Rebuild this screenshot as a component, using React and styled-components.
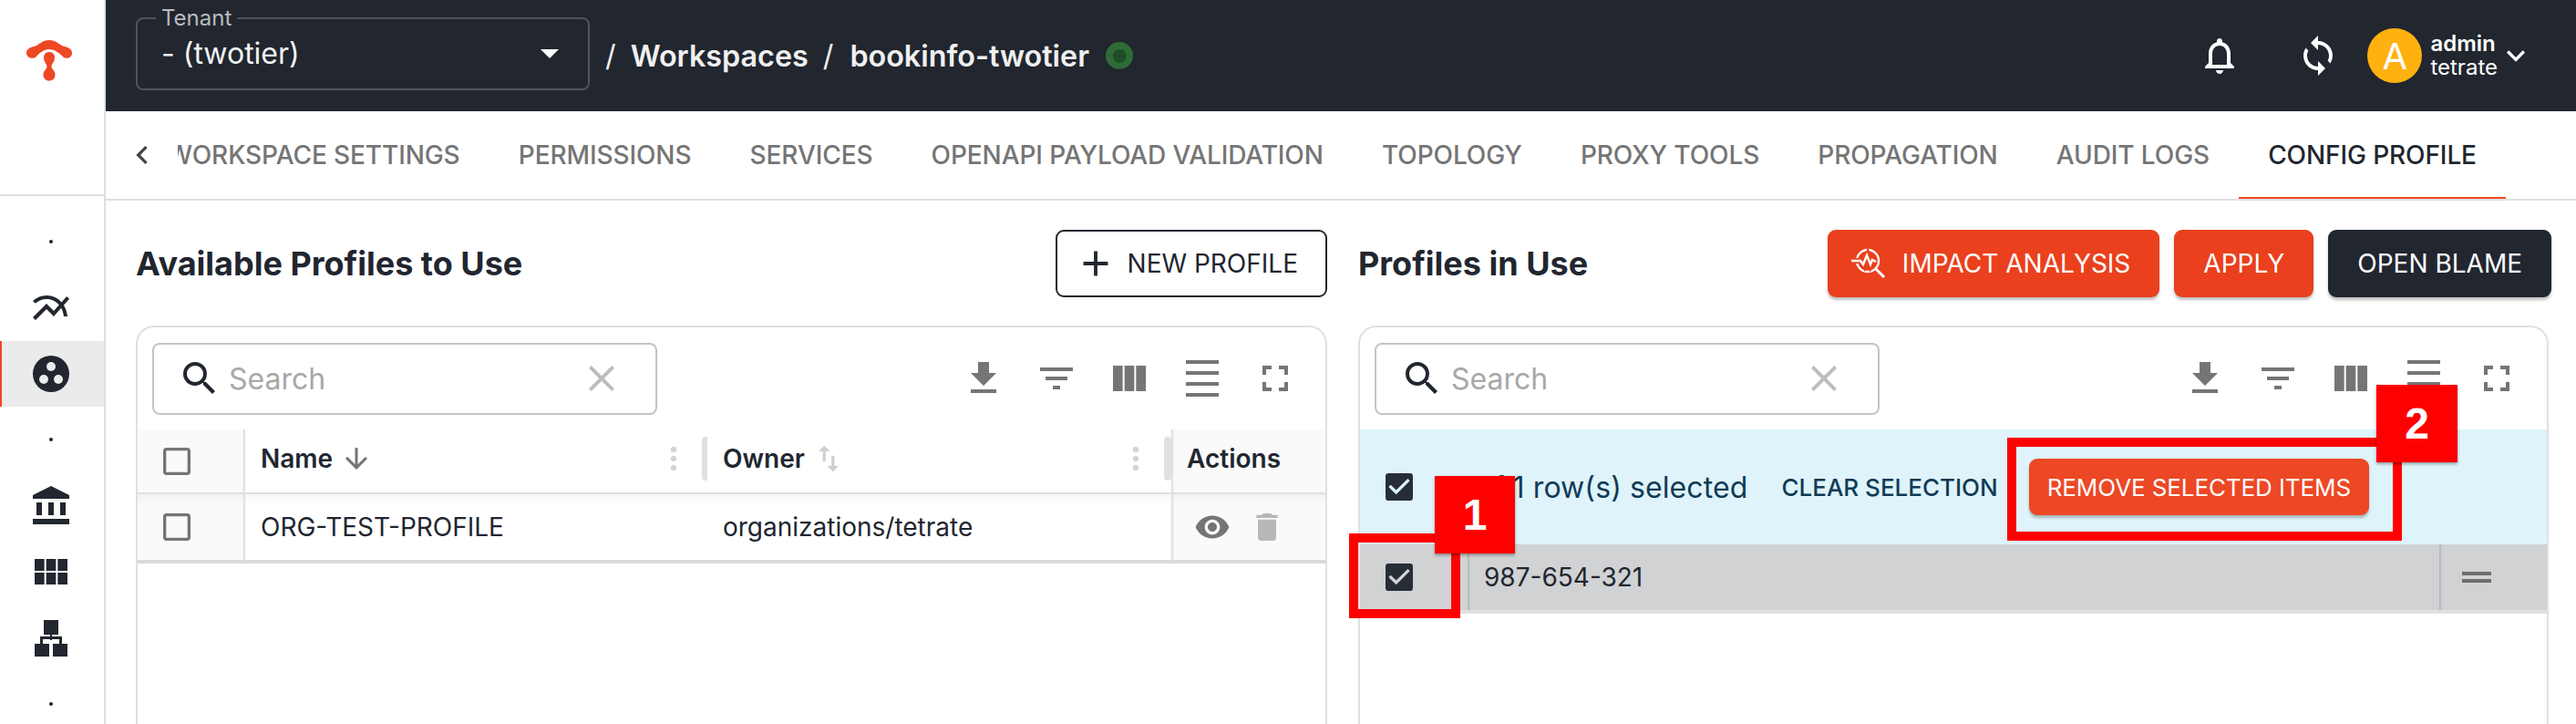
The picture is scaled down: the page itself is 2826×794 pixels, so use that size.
import React from 'react';
import styled, { createGlobalStyle } from 'styled-components';
import {
  MdAccountBalance,
  MdAdd,
  MdArrowDownward,
  MdArrowDropDown,
  MdCheckBox,
  MdCheckBoxOutlineBlank,
  MdChevronLeft,
  MdClose,
  MdDelete,
  MdDensitySmall,
  MdDragHandle,
  MdFileDownload,
  MdFilterList,
  MdFullscreen,
  MdKeyboardArrowDown,
  MdMoreVert,
  MdMultilineChart,
  MdNotificationsNone,
  MdSearch,
  MdSwapVert,
  MdSync,
  MdViewColumn,
  MdViewModule,
  MdVisibility,
} from 'react-icons/md';

const GlobalStyle = createGlobalStyle`
  html, body {
    margin: 0;
    padding: 0;
    background: #fff;
  }
  body {
    font-family: Inter, 'Liberation Sans', sans-serif;
    color: #21262f;
  }
  * { box-sizing: border-box; }
`;

const Page = styled.div`
  position: relative;
  display: grid;
  grid-template-columns: 116px 1fr;
  width: 2826px;
  height: 794px;
  overflow: hidden;
`;

/* sidebar */
const Sidebar = styled.aside`
  border-right: 2px solid #e0e0e0;
  display: flex;
  flex-direction: column;
`;

const LogoBlock = styled.div`
  height: 215px;
  flex-shrink: 0;
  border-bottom: 2px solid #e0e0e0;
  padding: 30px 0 0 20px;
  margin-bottom: 14px;
`;

const NavItem = styled.div`
  height: 72.4px;
  flex-shrink: 0;
  display: flex;
  align-items: center;
  justify-content: center;
  color: #21262f;
  font-size: 48px;
  background: ${(p) => (p.$active ? '#ebebeb' : 'transparent')};
  border-left: 2px solid ${(p) => (p.$active ? '#ee4723' : 'transparent')};
  padding-right: 4px;
`;

const NavDot = styled.span`
  width: 4px;
  height: 4px;
  border-radius: 50%;
  background: #21262f;
`;

/* top bar */
const Main = styled.main`
  display: flex;
  flex-direction: column;
  min-width: 0;
`;

const TopBar = styled.header`
  height: 122px;
  flex-shrink: 0;
  background: #21262f;
  color: #fff;
  display: flex;
  align-items: center;
  padding: 0 33px;
`;

const TenantSelect = styled.fieldset`
  width: 498px;
  height: 89px;
  margin: -14px 0 0;
  padding: 0 26px 10px 26px;
  border: 2px solid #50545b;
  border-radius: 8px;
  display: flex;
  align-items: center;
  justify-content: space-between;
  font-size: 32px;
  color: #f2f2f2;

  legend {
    padding: 0 6px;
    margin-left: -6px;
    font-size: 24px;
    line-height: 20px;
    color: #b9bbbe;
  }
`;

const Caret = styled.span`
  display: flex;
  font-size: 48px;
  color: #fff;
  margin-right: -8px;
`;

const Crumb = styled.span`
  font-size: 32.3px;
  font-weight: ${(p) => (p.$slash ? 400 : 600)};
  color: #f0f0f0;
  margin-left: ${(p) => p.$left}px;
`;

const StatusDot = styled.span`
  width: 30px;
  height: 30px;
  margin-left: 18px;
  border-radius: 50%;
  background: #2f6b36;
  display: flex;
  align-items: center;
  justify-content: center;

  &::after {
    content: '';
    width: 15px;
    height: 15px;
    border-radius: 50%;
    background: #1d4f25;
  }
`;

const TopActions = styled.div`
  margin-left: auto;
  display: flex;
  align-items: center;
  margin-right: 13px;
`;

const TopIcon = styled.span`
  display: flex;
  font-size: 48px;
  color: #fff;
  margin-right: ${(p) => p.$right}px;
`;

const Avatar = styled.span`
  width: 60px;
  height: 60px;
  border-radius: 50%;
  background: #ffb10f;
  color: #fff;
  font-size: 40px;
  display: flex;
  align-items: center;
  justify-content: center;
`;

const UserBlock = styled.div`
  margin-left: 9px;
  display: flex;
  flex-direction: column;
  font-size: 24px;
  line-height: 26px;
  color: #fff;

  b {
    font-weight: 600;
  }
`;

const UserChevron = styled.span`
  display: flex;
  font-size: 40px;
  color: #fff;
`;

/* tabs */
const TabBar = styled.nav`
  height: 98px;
  flex-shrink: 0;
  border-bottom: 2px solid #e0e0e0;
  display: flex;
  align-items: stretch;
`;

const TabBack = styled.span`
  width: 79px;
  flex-shrink: 0;
  display: flex;
  align-items: center;
  justify-content: center;
  font-size: 40px;
  color: #444;
`;

const TabScroller = styled.div`
  flex: 1;
  min-width: 0;
  overflow: hidden;
  display: flex;
  justify-content: flex-end;
  padding-right: 77px;
`;

const Tab = styled.span`
  flex-shrink: 0;
  display: flex;
  align-items: center;
  padding: 2px 32.1px 0;
  font-size: 28px;
  font-weight: 500;
  letter-spacing: -0.1px;
  white-space: nowrap;
  color: ${(p) => (p.$active ? '#21262f' : '#757575')};
  border-bottom: 4px solid ${(p) => (p.$active ? '#ee4723' : 'transparent')};
  margin-bottom: -2px;
`;

/* content */
const Content = styled.div`
  flex: 1;
  min-height: 0;
  display: grid;
  grid-template-columns: 1307px 1306px;
  column-gap: 34px;
  padding: 32px 0 0 33px;
`;

const Column = styled.section`
  display: flex;
  flex-direction: column;
  min-width: 0;
`;

const ColumnHead = styled.div`
  height: 74px;
  flex-shrink: 0;
  display: flex;
  align-items: center;
  justify-content: space-between;
  margin-bottom: 31px;
`;

const Title = styled.h2`
  margin: 0;
  font-size: 36px;
  font-weight: 700;
  color: #21262f;
`;

const ButtonRow = styled.div`
  display: flex;
  gap: 16px;
  margin-right: -3px;
`;

const Button = styled.button`
  height: 74px;
  display: flex;
  align-items: center;
  padding: 0 ${(p) => (p.$variant === 'outline' ? 30 : 32)}px 0 ${(p) => p.$pad || 32}px;
  border-radius: 9px;
  font-family: inherit;
  font-size: 28px;
  font-weight: 400;
  white-space: nowrap;
  color: ${(p) => (p.$variant === 'outline' ? '#21262f' : '#fff')};
  background: ${(p) =>
    p.$variant === 'outline' ? '#fff' : p.$variant === 'dark' ? '#21262f' : '#ea401d'};
  border: ${(p) => (p.$variant === 'outline' ? '2px solid #21262f' : 'none')};
  box-shadow: ${(p) => (p.$variant === 'outline' ? 'none' : '0 3px 3px rgba(0,0,0,0.25)')};

  svg {
    margin-right: ${(p) => p.$iconGap || 18}px;
  }
`;

const Panel = styled.div`
  flex: 1;
  border: 2px solid #e0e0e0;
  border-bottom: none;
  border-radius: 20px 20px 0 0;
  min-height: 0;
`;

const PanelTools = styled.div`
  height: 112px;
  display: flex;
  align-items: center;
  justify-content: space-between;
  padding: 0 15px 0 16px;
`;

const SearchBox = styled.div`
  width: 554px;
  height: 79px;
  border: 2px solid #c4c4c4;
  border-radius: 8px;
  display: flex;
  align-items: center;
  padding: 0 35px 0 26px;
  font-size: 32px;
  color: #a8a8a8;
`;

const SearchGlyph = styled.span`
  display: flex;
  font-size: 48px;
  color: #21262f;
  margin-right: 8px;
`;

const ClearGlyph = styled.span`
  display: flex;
  font-size: 48px;
  color: #bdbdbd;
  margin-left: auto;
`;

const ToolIcons = styled.div`
  display: flex;
`;

const ToolIcon = styled.span`
  width: 80px;
  height: 80px;
  display: flex;
  align-items: center;
  justify-content: center;
  font-size: 48px;
  color: #757575;
`;

const TableGrid = styled.div`
  display: grid;
  grid-template-columns: 118px 507px 509px 1fr;
  height: ${(p) => p.$height}px;
  border-bottom: ${(p) => p.$line}px solid ${(p) => (p.$line > 2 ? '#d9d9d9' : '#e0e0e0')};
`;

const Cell = styled.div`
  display: flex;
  align-items: center;
  padding-left: 17px;
  font-size: 28px;
  color: #21262f;
  min-width: 0;
  background: ${(p) =>
    p.$shade
      ? 'linear-gradient(#f2f2f2, #fafafa 12px)'
      : 'linear-gradient(#f7f7f7, #fff 14px)'};
`;

const HeadCell = styled(Cell)`
  background: #fff;
  font-weight: 600;
  padding-bottom: 5px;
`;

const PinnedHead = styled(Cell)`
  background: #fafafa;
  font-weight: 600;
  padding-bottom: ${(p) => (p.$right ? 0 : 5)}px;
  box-shadow: ${(p) => (p.$right ? 'inset -3px 0 2px -1px #dedede' : 'inset 3px 0 2px -1px #dedede')};
`;

const PinnedCell = styled(Cell)`
  box-shadow: ${(p) => (p.$right ? 'inset -3px 0 2px -1px #dedede' : 'inset 3px 0 2px -1px #dedede')};
`;

const CheckSlot = styled.span`
  display: flex;
  font-size: 40px;
  margin-left: ${(p) => p.$left ?? 6}px;
  color: ${(p) => (p.$checked ? '#272d37' : '#757575')};
`;

const SortIcon = styled.span`
  display: flex;
  font-size: ${(p) => (p.$muted ? 38 : 36)}px;
  margin-left: ${(p) => (p.$muted ? 7 : 8)}px;
  color: ${(p) => (p.$muted ? '#cfcfcf' : '#757575')};
`;

const MoreIcon = styled.span`
  display: flex;
  font-size: 40px;
  color: #d4d4d4;
  margin-left: auto;
  margin-right: 11px;
`;

const ResizeHandle = styled.span`
  width: 8px;
  height: 48px;
  border-radius: 4px;
  background: #e0e0e0;
  margin-right: ${(p) => p.$bleed || 0}px;
  flex-shrink: 0;
`;

const RowActions = styled.div`
  display: flex;
  align-items: center;
  gap: 20px;
  font-size: 40px;
  margin-left: 8px;
`;

const ActionGlyph = styled.span`
  display: flex;
  color: ${(p) => p.$color};
`;

const SelectionBanner = styled.div`
  height: 126px;
  background: #dff3fb;
  display: flex;
  align-items: center;
  padding-left: 23px;
  color: #0f3b55;
`;

const BannerCheck = styled(CheckSlot)`
  margin: 0 42px 0 0;
`;

const BannerText = styled.span`
  font-size: 32px;
  letter-spacing: 0.1px;
`;

const ClearLink = styled.span`
  font-size: 26px;
  font-weight: 500;
  margin-left: 37px;
`;

const RemoveButton = styled(Button)`
  height: 62px;
  margin-left: 34px;
  padding: 0 20px;
  font-size: 26px;
  letter-spacing: -0.1px;
  background: #ec4825;
`;

const SelectedRow = styled.div`
  height: 76px;
  display: grid;
  grid-template-columns: 118px 1fr 118px;
  background: #d1d2d4;
  border-bottom: 4px solid #e0e0e0;
`;

const SelectedCell = styled.div`
  display: flex;
  align-items: center;
  padding-left: ${(p) => p.$pad}px;
  font-size: 28px;
  color: #21262f;
  box-shadow: ${(p) => p.$edge || 'none'};
`;

const HandleIcon = styled.span`
  display: flex;
  font-size: 48px;
  color: #6e6e6e;
`;

/* red annotations drawn over the screenshot */
const Callout = styled.div`
  position: absolute;
  left: ${(p) => p.$x}px;
  top: ${(p) => p.$y}px;
  width: ${(p) => p.$w}px;
  height: ${(p) => p.$h}px;
  border: 10px solid #fe0000;
`;

const Badge = styled.div`
  position: absolute;
  left: ${(p) => p.$x}px;
  top: ${(p) => p.$y}px;
  width: ${(p) => p.$w}px;
  height: ${(p) => p.$h}px;
  background: #fe0000;
  color: #fff;
  font-family: 'Liberation Sans', Arial, sans-serif;
  font-weight: 700;
  font-size: 48px;
  display: flex;
  align-items: center;
  justify-content: center;
  box-shadow: 0 2px 3px rgba(0, 0, 0, 0.35);
`;

const TetrateLogo = () => (
  <svg width="70" height="70" viewBox="0 0 70 70" fill="#ee4723">
    <path d="M9 28C9 24 13 22 17 21C23 20 25 14 34 14C43 14 45 20 51 21C55 22 59 24 59 28C59 33 54 35 50 33C45 28 40 24 34 24C28 24 23 28 19 33C15 35 9 33 9 28Z" />
    <path d="M34 27C38 27 40 30 40 33C40 38 36.5 40 36.5 43C36.5 46 40.5 47 40.5 52C40.5 56 38 58.5 34 58.5C30 58.5 27.5 56 27.5 52C27.5 47 31.5 46 31.5 43C31.5 40 28 38 28 33C28 30 30 27 34 27Z" />
  </svg>
);

const WorkspacesGlyph = () => (
  <svg width="40" height="40" viewBox="0 0 40 40">
    <circle cx="20" cy="20" r="20" fill="#21262f" />
    <circle cx="20" cy="12" r="5" fill="#ebebeb" />
    <circle cx="12" cy="26" r="5" fill="#ebebeb" />
    <circle cx="28" cy="26" r="5" fill="#ebebeb" />
  </svg>
);

const HierarchyGlyph = () => (
  <svg width="36" height="40" viewBox="0 0 36 40" fill="#21262f">
    <rect x="10" y="0" width="16" height="16" />
    <rect x="17" y="16" width="2" height="6" />
    <rect x="6" y="18" width="24" height="3" />
    <rect x="0" y="26" width="16" height="14" />
    <rect x="20" y="26" width="16" height="14" />
    <rect x="6" y="18" width="3" height="8" />
    <rect x="27" y="18" width="3" height="8" />
  </svg>
);

const ImpactGlyph = () => (
  <svg width="38" height="36" viewBox="0 0 38 36" fill="none" stroke="#fff" strokeWidth="2.4">
    <circle cx="18" cy="15" r="12" />
    <path d="M27 24L36 33" strokeWidth="3" />
    <path d="M0 15H11L14 20L18 9L21 19L23 14L27 16" stroke="#ea401d" strokeWidth="6" />
    <path d="M0 15H10L13 19L17 9L21 19L23 14L27 16" />
  </svg>
);

const TOOL_ICONS = [MdFileDownload, MdFilterList, MdViewColumn, MdDensitySmall, MdFullscreen];

const TABS = [
  'WORKSPACE SETTINGS',
  'PERMISSIONS',
  'SERVICES',
  'OPENAPI PAYLOAD VALIDATION',
  'TOPOLOGY',
  'PROXY TOOLS',
  'PROPAGATION',
  'AUDIT LOGS',
  'CONFIG PROFILE',
];

const PanelToolbar = () => (
  <PanelTools>
    <SearchBox>
      <SearchGlyph>
        <MdSearch />
      </SearchGlyph>
      Search
      <ClearGlyph>
        <MdClose />
      </ClearGlyph>
    </SearchBox>
    <ToolIcons>
      {TOOL_ICONS.map((Icon, i) => (
        <ToolIcon key={i}>
          <Icon />
        </ToolIcon>
      ))}
    </ToolIcons>
  </PanelTools>
);

const App = () => {
  return (
    <Page>
      <GlobalStyle />
      <Sidebar>
        <LogoBlock>
          <TetrateLogo />
        </LogoBlock>
        <NavItem><NavDot /></NavItem>
        <NavItem><MdMultilineChart /></NavItem>
        <NavItem $active><WorkspacesGlyph /></NavItem>
        <NavItem><NavDot /></NavItem>
        <NavItem><MdAccountBalance /></NavItem>
        <NavItem><MdViewModule /></NavItem>
        <NavItem><HierarchyGlyph /></NavItem>
        <NavItem><NavDot /></NavItem>
      </Sidebar>

      <Main>
        <TopBar>
          <TenantSelect>
            <legend>Tenant</legend>
            - (twotier)
            <Caret><MdArrowDropDown /></Caret>
          </TenantSelect>
          <Crumb $slash $left={17}>/</Crumb>
          <Crumb $left={16}>Workspaces</Crumb>
          <Crumb $slash $left={16}>/</Crumb>
          <Crumb $left={18}>bookinfo-twotier</Crumb>
          <StatusDot />
          <TopActions>
            <TopIcon $right={60}><MdNotificationsNone /></TopIcon>
            <TopIcon $right={30}><MdSync /></TopIcon>
            <Avatar>A</Avatar>
            <UserBlock>
              <b>admin</b>
              <span>tetrate</span>
            </UserBlock>
            <UserChevron><MdKeyboardArrowDown /></UserChevron>
          </TopActions>
        </TopBar>

        <TabBar>
          <TabBack><MdChevronLeft /></TabBack>
          <TabScroller>
            {TABS.map((t) => (
              <Tab key={t} $active={t === 'CONFIG PROFILE'}>{t}</Tab>
            ))}
          </TabScroller>
        </TabBar>

        <Content>
          <Column>
            <ColumnHead>
              <Title>Available Profiles to Use</Title>
              <Button $variant="outline" $pad={19} $iconGap={12}><MdAdd size={46} />NEW PROFILE</Button>
            </ColumnHead>
            <Panel>
              <PanelToolbar />
              <TableGrid $height={71} $line={2}>
                <PinnedHead $right><CheckSlot><MdCheckBoxOutlineBlank /></CheckSlot></PinnedHead>
                <HeadCell>
                  Name
                  <SortIcon><MdArrowDownward /></SortIcon>
                  <MoreIcon><MdMoreVert /></MoreIcon>
                  <ResizeHandle $bleed={-2} />
                </HeadCell>
                <HeadCell>
                  Owner
                  <SortIcon $muted><MdSwapVert /></SortIcon>
                  <MoreIcon><MdMoreVert /></MoreIcon>
                  <ResizeHandle />
                </HeadCell>
                <PinnedHead>Actions</PinnedHead>
              </TableGrid>
              <TableGrid $height={76} $line={4}>
                <PinnedCell $right $shade><CheckSlot><MdCheckBoxOutlineBlank /></CheckSlot></PinnedCell>
                <Cell>ORG-TEST-PROFILE</Cell>
                <Cell>organizations/tetrate</Cell>
                <PinnedCell $shade>
                  <RowActions>
                    <ActionGlyph $color="#757575"><MdVisibility /></ActionGlyph>
                    <ActionGlyph $color="#b8b8b8"><MdDelete /></ActionGlyph>
                  </RowActions>
                </PinnedCell>
              </TableGrid>
            </Panel>
          </Column>

          <Column>
            <ColumnHead>
              <Title>Profiles in Use</Title>
              <ButtonRow>
                <Button $pad={26}><ImpactGlyph />IMPACT ANALYSIS</Button>
                <Button>APPLY</Button>
                <Button $variant="dark">OPEN BLAME</Button>
              </ButtonRow>
            </ColumnHead>
            <Panel>
              <PanelToolbar />
              <SelectionBanner>
                <BannerCheck $checked><MdCheckBox /></BannerCheck>
                <BannerText>1 of 1 row(s) selected</BannerText>
                <ClearLink>CLEAR SELECTION</ClearLink>
                <RemoveButton>REMOVE SELECTED ITEMS</RemoveButton>
              </SelectionBanner>
              <SelectedRow>
                <SelectedCell $pad={23}>
                  <CheckSlot $checked $left={0}><MdCheckBox /></CheckSlot>
                </SelectedCell>
                <SelectedCell $pad={18} $edge="inset 3px 0 2px -1px #b5b6b8">987-654-321</SelectedCell>
                <SelectedCell $pad={17} $edge="inset 3px 0 2px -1px #b5b6b8">
                  <HandleIcon><MdDragHandle /></HandleIcon>
                </SelectedCell>
              </SelectedRow>
            </Panel>
          </Column>
        </Content>
      </Main>

      <Callout $x={1480} $y={585} $w={122} $h={93} />
      <Badge $x={1574} $y={522} $w={88} $h={85}>1</Badge>
      <Callout $x={2202} $y={480} $w={433} $h={113} />
      <Badge $x={2607} $y={422} $w={89} $h={85}>2</Badge>
    </Page>
  );
};

export default App;
